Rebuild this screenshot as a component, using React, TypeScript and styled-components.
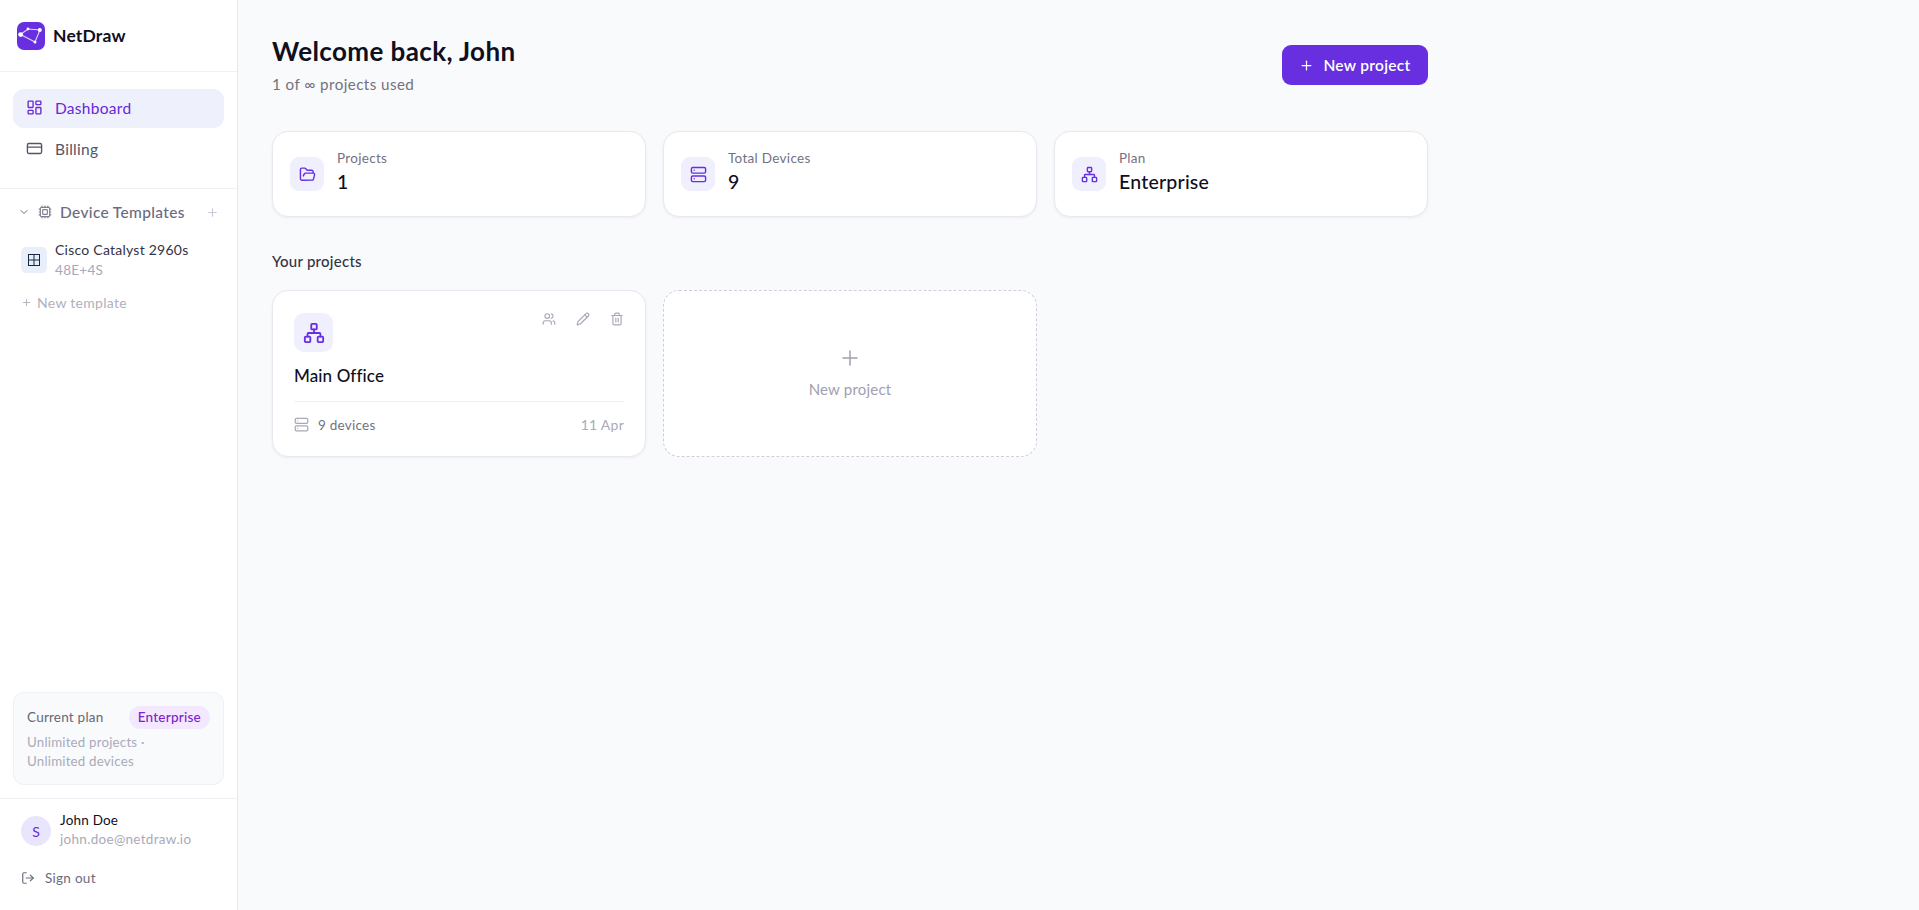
import React from 'react';
import styled, { createGlobalStyle } from 'styled-components';
import { LayoutDashboard, CreditCard, ChevronDown, Cpu, Plus, LogOut, FolderOpen, Server, Network, Users, Pencil, Trash2 } from 'lucide-react';

const Global = createGlobalStyle`
  * { box-sizing: border-box; }
  html, body { margin: 0; padding: 0; height: 100%; }
  body { font-family: Lato, "Open Sans", sans-serif; background: #f9fafc; color: #0f0f1e; }
`;

const Shell = styled.div`display: flex; height: 910px; overflow: hidden;`;
const Sidebar = styled.aside`
  width: 238px; flex: none; display: flex; flex-direction: column;
  background: #fff; border-right: 1px solid #e8e8f0;
`;
const Brand = styled.div`
  height: 72px; flex: none; display: flex; align-items: center; gap: 8px; padding: 0 17px;
  border-bottom: 1px solid #f0f0f5;
  font-size: 17.5px; font-weight: 700; color: #0f0f1e; letter-spacing: .18px;
`;
const LogoBox = styled.span`
  width: 28px; height: 28px; border-radius: 7px; background: #672fe0; display: flex;
  align-items: center; justify-content: center;
`;
const Nav = styled.nav`
  height: 117px; flex: none; padding: 17px 13px 0; border-bottom: 1px solid #f0f0f5;
  display: flex; flex-direction: column; gap: 2px;
`;
const NavItem = styled.div<{ $active?: boolean }>`
  height: 39px; border-radius: 11px; display: flex; align-items: center; gap: 12px; padding: 0 13px 2px;
  font-size: 15.5px; letter-spacing: .28px;
  background: ${p => (p.$active ? '#eef0fc' : 'transparent')};
  color: ${p => (p.$active ? '#6927d6' : '#555566')};
`;
const Section = styled.section`padding: 13px 13px 0; flex: 1;`;
const SectionHead = styled.div`
  height: 20px; display: flex; align-items: center; padding: 0 5px; color: #6b6b80;
  font-size: 15.5px; font-weight: 500; letter-spacing: .34px;
`;
const SectionTitle = styled.span`margin-left: 8px; flex: 1;`;
const Chevron = styled(ChevronDown)`margin-right: 8px;`;
const CpuIcon = styled(Cpu)`opacity: .85;`;
const TemplateRow = styled.div`display: flex; align-items: center; gap: 8px; padding: 0 8px; margin-top: 18px;`;
const TemplateIcon = styled.span`
  width: 26px; height: 26px; border-radius: 5px; background: #e9eefb; display: flex;
  align-items: center; justify-content: center;
`;
const TemplateText = styled.div`display: flex; flex-direction: column;`;
const TemplateName = styled.span`font-size: 14px; color: #333344; line-height: 20px; letter-spacing: .24px;`;
const TemplateMeta = styled.span`font-size: 13.5px; color: #a8a8b8; line-height: 20px; letter-spacing: .3px;`;
const NewTemplate = styled.div`
  display: flex; align-items: center; gap: 5px; padding: 0 8px; margin-top: 14px;
  font-size: 14px; color: #b0b0c0; letter-spacing: .3px;
`;
const PlanCard = styled.div`
  flex: none; margin: 0 13px 13px; height: 93px; padding: 13px 13px; border-radius: 11px;
  background: #f9fafc; border: 1px solid #f0f0f5;
`;
const PlanHead = styled.div`display: flex; align-items: center; justify-content: space-between; height: 22px;`;
const PlanLabel = styled.span`font-size: 13.5px; color: #666677; letter-spacing: .22px;`;
const PlanBadge = styled.span`
  height: 23px; padding: 0 9px; border-radius: 12px; background: #f3e8ff; color: #7e22ce;
  font-size: 13.5px; font-weight: 500; display: flex; align-items: center; letter-spacing: .25px;
`;
const PlanText = styled.div`margin-top: 5px; font-size: 13.3px; line-height: 19px; color: #aaaaba; letter-spacing: .2px;`;
const UserBlock = styled.div`flex: none; height: 112px; border-top: 1px solid #f0f0f5; padding: 14px 21px 0;`;
const UserRow = styled.div`display: flex; align-items: center; gap: 9px;`;
const Avatar = styled.span`
  width: 30px; height: 30px; border-radius: 50%; background: #e8e6fc; color: #6927d6; font-size: 14px;
  display: flex; align-items: center; justify-content: center;
`;
const UserText = styled.div`display: flex; flex-direction: column; margin-top: -2px;`;
const UserName = styled.span`font-size: 13.5px; line-height: 19px; color: #0f0f1e; letter-spacing: .2px;`;
const UserMail = styled.span`font-size: 13.5px; line-height: 19px; color: #aaaaba; letter-spacing: .3px;`;
const SignOut = styled.div`
  display: flex; align-items: center; gap: 10px; margin-top: 21px; font-size: 13.5px; color: #6b6b80; letter-spacing: .28px;
`;

const Main = styled.main`flex: 1; padding: 32px 0 0 34px; min-width: 0;`;
const Content = styled.div`width: 1156px;`;
const Header = styled.header`display: flex; justify-content: space-between; align-items: center; height: 66px;`;
const TitleBlock = styled.div`display: flex; flex-direction: column; margin-top: -3px;`;
const Title = styled.h1`margin: 0; font-size: 26px; line-height: 34px; font-weight: 700; color: #0f0f1e; letter-spacing: .4px;`;
const Subtitle = styled.p`margin: 6px 0 0; font-size: 15.2px; line-height: 20px; color: #72727f; letter-spacing: .42px;`;
const PrimaryButton = styled.button`
  width: 146px; height: 40px; border: 0; border-radius: 9px; background: #672fe0; color: #fff;
  display: flex; align-items: center; justify-content: center; gap: 9px;
  font: 600 15.5px Lato, sans-serif; letter-spacing: .3px;
`;
const Stats = styled.div`display: grid; grid-template-columns: repeat(3, 1fr); gap: 17px; margin-top: 33px;`;
const Card = styled.div`
  background: #fff; border: 1px solid #e8e8f0; border-radius: 16px; box-shadow: 0 1px 3px rgba(20,20,50,.06);
`;
const StatCard = styled(Card)`height: 86px; display: flex; align-items: center; gap: 13px; padding: 0 17px;`;
const IconTile = styled.span<{ $size: number }>`
  width: ${p => p.$size}px; height: ${p => p.$size}px; border-radius: ${p => (p.$size === 34 ? 9 : 10)}px;
  background: #f0effe; display: flex; align-items: center; justify-content: center; color: #672fe0; flex: none;
`;
const StatText = styled.div`display: flex; flex-direction: column; margin-top: -1px;`;
const StatLabel = styled.span`font-size: 13.5px; line-height: 17px; color: #72727f; letter-spacing: .3px;`;
const StatValue = styled.span`font-size: 19.5px; line-height: 30px; font-weight: 500; color: #0f0f1e; letter-spacing: .22px;`;
const SectionLabel = styled.h2`margin: 34px 0 0; font-size: 15px; line-height: 20px; font-weight: 500; color: #333344; letter-spacing: .25px;`;
const Projects = styled.div`display: grid; grid-template-columns: repeat(3, 1fr); gap: 17px; margin-top: 19px;`;
const ProjectCard = styled(Card)`height: 167px; padding: 22px 21px 0; display: flex; flex-direction: column;`;
const ProjectTop = styled.div`display: flex; justify-content: space-between; align-items: flex-start;`;
const Actions = styled.div`display: flex; gap: 20px; color: #a8a8b8; margin-top: -1px;`;
const ProjectName = styled.div`margin-top: 12px; font-size: 17px; line-height: 24px; font-weight: 500; color: #0f0f1e; letter-spacing: .12px;`;
const ProjectFoot = styled.div`
  margin-top: 13px; padding-top: 14px; border-top: 1px solid #f0f0f5; display: flex; justify-content: space-between; align-items: center;
  font-size: 13.5px; color: #72727f; letter-spacing: .25px;
`;
const Devices = styled.span`display: flex; align-items: center; gap: 9px;`;
const DateText = styled.span`color: #aaaaba; font-size: 14px;`;
const ServerMuted = styled(Server)`color: #a8a8b8;`;
const AddCard = styled.div`
  height: 167px; padding-bottom: 4px; border: 1px dashed #cfcfdc; border-radius: 16px; background: #fff; display: flex;
  flex-direction: column; align-items: center; justify-content: center; gap: 10px; color: #a0a0b0;
  font-size: 15px; letter-spacing: .2px;
`;

export default function App() {
  return (
    <>
      <Global />
      <Shell>
        <Sidebar>
          <Brand>
            <LogoBox>
              <svg width="28" height="28" viewBox="0 0 28 28" fill="none">
                <path d="M3.5 12.5 L11 7 L23 8 L18 20 Z M3.5 12.5 L18 20" stroke="#fff" strokeWidth="1.1" opacity=".8" />
                <circle cx="3.6" cy="12.6" r="2.4" fill="#fff" />
                <circle cx="11" cy="7" r="1.4" fill="#fff" />
                <circle cx="22.8" cy="8" r="2" fill="#fff" />
                <circle cx="18" cy="20" r="1.5" fill="#fff" />
              </svg>
            </LogoBox>
            NetDraw
          </Brand>
          <Nav>
            <NavItem $active><LayoutDashboard size={17} strokeWidth={1.9} />Dashboard</NavItem>
            <NavItem><CreditCard size={17} strokeWidth={1.9} />Billing</NavItem>
          </Nav>
          <Section>
            <SectionHead>
              <Chevron size={12} />
              <CpuIcon size={14} />
              <SectionTitle>Device Templates</SectionTitle>
              <Plus size={13} color="#c8c8d4" />
            </SectionHead>
            <TemplateRow>
              <TemplateIcon>
                <svg width="12" height="12" viewBox="0 0 12 12" fill="#e4eefb" stroke="#16283f" strokeWidth="1">
                  <rect x=".5" y=".5" width="11" height="11" />
                  <path d="M6 .5V11.5M.5 6H11.5" fill="none" />
                </svg>
              </TemplateIcon>
              <TemplateText>
                <TemplateName>Cisco Catalyst 2960s</TemplateName>
                <TemplateMeta>48E+4S</TemplateMeta>
              </TemplateText>
            </TemplateRow>
            <NewTemplate><Plus size={11} />New template</NewTemplate>
          </Section>
          <PlanCard>
            <PlanHead>
              <PlanLabel>Current plan</PlanLabel>
              <PlanBadge>Enterprise</PlanBadge>
            </PlanHead>
            <PlanText>Unlimited projects ·<br />Unlimited devices</PlanText>
          </PlanCard>
          <UserBlock>
            <UserRow>
              <Avatar>S</Avatar>
              <UserText>
                <UserName>John Doe</UserName>
                <UserMail>john.doe@netdraw.io</UserMail>
              </UserText>
            </UserRow>
            <SignOut><LogOut size={14} />Sign out</SignOut>
          </UserBlock>
        </Sidebar>
        <Main>
          <Content>
            <Header>
              <TitleBlock>
                <Title>Welcome back, John</Title>
                <Subtitle>1 of ∞ projects used</Subtitle>
              </TitleBlock>
              <PrimaryButton><Plus size={15} />New project</PrimaryButton>
            </Header>
            <Stats>
              <StatCard>
                <IconTile $size={34}><FolderOpen size={17} /></IconTile>
                <StatText><StatLabel>Projects</StatLabel><StatValue>1</StatValue></StatText>
              </StatCard>
              <StatCard>
                <IconTile $size={34}><Server size={17} /></IconTile>
                <StatText><StatLabel>Total Devices</StatLabel><StatValue>9</StatValue></StatText>
              </StatCard>
              <StatCard>
                <IconTile $size={34}><Network size={17} /></IconTile>
                <StatText><StatLabel>Plan</StatLabel><StatValue>Enterprise</StatValue></StatText>
              </StatCard>
            </Stats>
            <SectionLabel>Your projects</SectionLabel>
            <Projects>
              <ProjectCard>
                <ProjectTop>
                  <IconTile $size={39}><Network size={22} /></IconTile>
                  <Actions><Users size={14} /><Pencil size={14} /><Trash2 size={14} /></Actions>
                </ProjectTop>
                <ProjectName>Main Office</ProjectName>
                <ProjectFoot>
                  <Devices><ServerMuted size={15} />9 devices</Devices>
                  <DateText>11 Apr</DateText>
                </ProjectFoot>
              </ProjectCard>
              <AddCard><Plus size={24} strokeWidth={1.5} />New project</AddCard>
            </Projects>
          </Content>
        </Main>
      </Shell>
    </>
  );
}
